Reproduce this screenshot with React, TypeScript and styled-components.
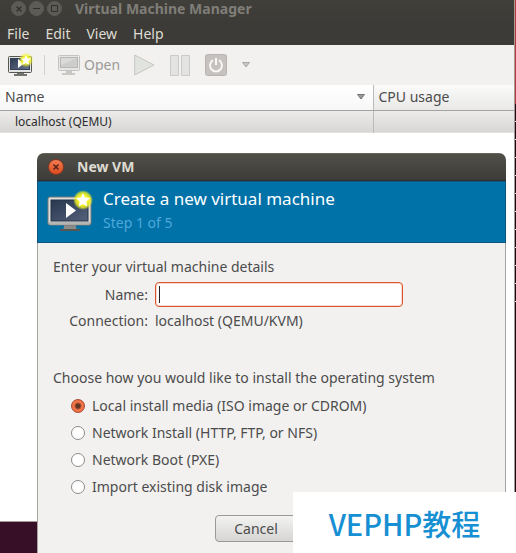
import React, { useState } from "react";
import styled, { createGlobalStyle } from "styled-components";

const GlobalStyle = createGlobalStyle`
  * { box-sizing: border-box; }
  body {
    margin: 0;
    font-family: "Noto Sans", "Noto Sans CJK SC", sans-serif;
    font-size: 14px;
    line-height: 20px;
    color: #4c4c4c;
  }
  button, input { font: inherit; color: inherit; margin: 0; }
`;

const Desktop = styled.main`
  position: relative;
  display: flex;
  min-height: 100vh;
  padding: 0 1px 31px 0;
  background: #371027;
`;

const ScreenEdge = styled.div`
  position: absolute;
  top: 0;
  right: 0;
  width: 1px;
  height: 100%;
  background:
    linear-gradient(#b8383c, #b8383c) 0 0 / 1px 104px no-repeat,
    repeating-linear-gradient(#1c0714 0 17px, #e8e4e6 17px 18px) 0 104px / 1px 204px no-repeat,
    #1c0714;
`;

const MainWindow = styled.section`
  display: flex;
  flex: 1;
  flex-direction: column;
  min-width: 0;
  border-right: 1px solid #a09d98;
  border-bottom: 1px solid #a09d98;
  background: #fff;
`;

const TitleBar = styled.header`
  display: flex;
  align-items: center;
  gap: 3px;
  height: 22px;
  padding: 0 0 5px 11px;
  background: linear-gradient(#403f3a, #3c3b37);
`;

const WindowButton = styled.button<{ $active?: boolean }>`
  display: grid;
  place-items: center;
  flex: none;
  width: ${(p) => (p.$active ? 16 : 15)}px;
  height: ${(p) => (p.$active ? 16 : 15)}px;
  padding: 0;
  border: 1px solid ${(p) => (p.$active ? "#8e3a20" : "#5d5b56")};
  border-radius: 50%;
  background: ${(p) => (p.$active ? "linear-gradient(#f47c54, #dd4b20)" : "#5d5b56")};
  color: ${(p) => (p.$active ? "#4a2014" : "#31302c")};

  svg { display: block; }
`;

const WindowTitle = styled.h1`
  margin: 0;
  padding-left: 10px;
  font-size: 14px;
  font-weight: 700;
  line-height: 16px;
  white-space: nowrap;
  color: #807d78;
`;

const DialogTitle = styled(WindowTitle)`
  color: #dfdbd2;
`;

const MenuBar = styled.nav`
  display: flex;
  align-items: center;
  gap: 16px;
  height: 23px;
  padding: 0 7px;
  background: #3c3b37;
`;

const MenuItem = styled.button`
  padding: 0;
  border: 0;
  background: none;
  color: #dfdbd2;
`;

const Toolbar = styled.div`
  display: flex;
  align-items: center;
  height: 40px;
  padding: 0 8px;
  background: #f2f1f0;
`;

const ToolButton = styled.button`
  display: flex;
  align-items: center;
  gap: 4px;
  margin-right: 15px;
  padding: 0;
  border: 0;
  background: none;
  color: #9c9a97;

  svg { display: block; }
`;

const OpenButton = styled(ToolButton)`
  margin-right: 14px;
`;

const Separator = styled.span`
  width: 1px;
  height: 20px;
  margin: 0 13px 0 -4px;
  background: #d3d1ce;
`;

const MachineTable = styled.table`
  width: 100%;
  table-layout: fixed;
  border-collapse: collapse;
`;

const HeaderCell = styled.th<{ $sorted?: boolean }>`
  width: ${(p) => (p.$sorted ? "auto" : "141px")};
  height: 25px;
  padding: 0 5px;
  border-bottom: 1px solid #a5a3a0;
  border-left: ${(p) => (p.$sorted ? "0" : "1px solid #bdbbb8")};
  background: ${(p) => (p.$sorted ? "linear-gradient(#fff, #f7f7f7)" : "linear-gradient(#fafafa, #e9e8e7)")};
  font-weight: 400;
  text-align: left;
`;

const HeaderLabel = styled.span`
  display: flex;
  align-items: center;
  justify-content: space-between;
  padding-right: 3px;
`;

const Cell = styled.td`
  height: 23px;
  padding: 0 15px;
  border-left: 1px solid #bdbbb8;
  background: linear-gradient(#ececeb, #d8d6d4);
  color: #2c2c2c;
  font-size: 12px;

  &:first-child { border-left: 0; }
`;

const Dialog = styled.section`
  position: absolute;
  top: 153px;
  right: 10px;
  bottom: 0;
  left: 37px;
  overflow: hidden;
  border-radius: 7px 7px 0 0;
  background: #f2f1f0;
`;

const DialogTitleBar = styled.header`
  display: flex;
  align-items: center;
  gap: 3px;
  height: 28px;
  padding: 0 11px;
  border-top: 1px solid #66645c;
  border-bottom: 1px solid #302f2b;
  background: linear-gradient(#504f48, #3d3c38);
`;

const Banner = styled.div`
  display: flex;
  align-items: center;
  gap: 10px;
  height: 62px;
  padding: 0 9px 2px;
  border: 1px solid #0b5682;
  background: #0072a8;

  svg { display: block; flex: none; }
`;

const BannerTitle = styled.h2`
  margin: 0;
  color: #fff;
  font-size: 17px;
  font-weight: 400;
  line-height: 24px;
`;

const BannerStep = styled.p`
  margin: 0;
  color: #4fa8dc;
  line-height: 24px;
`;

const Form = styled.form`
  height: 100%;
  padding: 14px 15px;
  border: solid #a5a3a0;
  border-width: 0 1px;
`;

const Details = styled.div`
  display: grid;
  grid-template-columns: 95px 248px;
  column-gap: 7px;
  align-items: center;
  margin-top: 5px;
`;

const FieldLabel = styled.label`
  text-align: right;
`;

const NameInput = styled.input`
  width: 100%;
  height: 25px;
  padding: 0 4px;
  border: 1px solid #d9552b;
  border-radius: 4px;
  outline: 0;
  background: #fff;
  box-shadow: inset 0 0 0 1px #f9d9cd;
`;

const Caret = styled.span`
  justify-self: start;
  width: 1px;
  height: 17px;
  margin-left: 4px;
  background: #222;
  pointer-events: none;
`;

const Field = styled.div`
  display: grid;
  align-items: center;

  > * { grid-area: 1 / 1; }
`;

const ConnectionRow = styled.span`
  line-height: 28px;
`;

const Options = styled.fieldset`
  margin: 29px 0 0;
  padding: 0;
  border: 0;
`;

const OptionsTitle = styled.legend`
  padding: 0;
  line-height: 28px;
  white-space: nowrap;
`;

const Option = styled.label`
  display: flex;
  align-items: center;
  gap: 7px;
  height: 27px;
  padding-left: 18px;
`;

const Radio = styled.input`
  appearance: none;
  width: 14px;
  height: 14px;
  border: 1px solid #8c8a87;
  border-radius: 50%;
  background: #fff;

  &:checked {
    border-color: #a8492b;
    background: radial-gradient(circle, #653321 0 2px, #f4764a 4px 5px, #ef6a3c 6px);
  }
`;

const Actions = styled.div`
  display: flex;
  padding: 15px 0 0 162px;
`;

const CancelButton = styled.button`
  width: 82px;
  height: 27px;
  padding: 0;
  border: 1px solid #9b9996;
  border-radius: 4px;
  background: linear-gradient(#f3f3f2, #d6d5d4);
`;

const Watermark = styled.aside`
  position: absolute;
  right: 0;
  bottom: 0;
  display: grid;
  place-items: center;
  width: 223px;
  height: 61px;
  background: #fff;
  color: #178fd3;
  font-family: "Noto Sans CJK SC", sans-serif;
  font-size: 29px;
  font-weight: 500;
  line-height: 40px;
`;

const CloseMark = () => (
  <svg width="8" height="8" viewBox="0 0 8 8" stroke="currentColor" strokeWidth="1.4">
    <path d="M1.5 1.5l5 5M6.5 1.5l-5 5" />
  </svg>
);

const MonitorIcon = () => (
  <svg width="46" height="42" viewBox="0 0 46 42">
    <defs>
      <linearGradient id="banner-screen" x2="1" y2="1">
        <stop stopColor="#29384f" />
        <stop offset="1" stopColor="#53617a" />
      </linearGradient>
      <radialGradient id="banner-glow">
        <stop offset=".45" stopColor="#fff82a" />
        <stop offset=".75" stopColor="#eeee20" stopOpacity=".8" />
        <stop offset="1" stopColor="#e6ee20" stopOpacity="0" />
      </radialGradient>
    </defs>
    <path d="M17 34h12v4l4 3H13l4-3z" fill="#8b8c89" />
    <path d="M13 39h20v2H13z" fill="#555753" />
    <rect x="1" y="7" width="43" height="28" rx="2" fill="#dededc" stroke="#777975" />
    <path d="M2 32h41v2H2z" fill="#b5b6b3" />
    <rect x="4" y="10" width="37" height="21" fill="url(#banner-screen)" stroke="#263346" />
    <path d="M19 13v15l10-7.500z" fill="#fff" />
    <circle cx="36" cy="10" r="10" fill="url(#banner-glow)" />
    <path d="M36 3l2 4.500 5 .6-3.700 3.400 1 5-4.300-2.500-4.300 2.500 1-5-3.700-3.400 5-.6z" fill="#fff" />
  </svg>
);

const NewMachineIcon = () => (
  <svg width="25" height="24" viewBox="0 0 25 24">
    <defs>
      <linearGradient id="new-screen" x2="1" y2="1">
        <stop stopColor="#2c3a52" />
        <stop offset="1" stopColor="#65728a" />
      </linearGradient>
      <radialGradient id="new-glow">
        <stop offset=".5" stopColor="#f8f628" />
        <stop offset="1" stopColor="#f2f22a" stopOpacity="0" />
      </radialGradient>
    </defs>
    <path d="M9 19h7v2h3v2H6v-2h3z" fill="#72736f" />
    <rect x=".5" y="3.500" width="23" height="16" rx="1" fill="#e4e4e2" stroke="#555753" />
    <rect x="2.500" y="5.500" width="19" height="11" fill="url(#new-screen)" stroke="#344158" />
    <path d="M10 6v9l6-4.500z" fill="#fff" />
    <circle cx="18" cy="7" r="7.500" fill="url(#new-glow)" />
    <path d="M18 2l1.500 3.300 3.600.4-2.700 2.400.8 3.600-3.200-1.800-3.200 1.800.8-3.600-2.700-2.400 3.600-.4z" fill="#fff" />
  </svg>
);

const OpenIcon = () => (
  <svg width="22" height="20" viewBox="0 0 22 20">
    <rect x=".5" y=".5" width="21" height="15" rx="1" fill="#e6e6e4" stroke="#c4c3c0" />
    <rect x="2.500" y="2.500" width="17" height="10" fill="#cdcdcb" stroke="#b8b7b5" />
    <path d="M3 3h16L3 10z" fill="#dadad8" />
    <path d="M8 16h6v2h3v2H4v-2h4z" fill="#c9c8c5" />
  </svg>
);

const PlayIcon = () => (
  <svg width="21" height="22" viewBox="0 0 21 22">
    <path d="M.7 1v20L20 11z" fill="#e1e3de" stroke="#c6c7c3" />
  </svg>
);

const PauseIcon = () => (
  <svg width="20" height="21" viewBox="0 0 20 21" fill="#e3e4e1" stroke="#cbcbc8">
    <path d="M.5.5h8v20h-8zM11.500.5h8v20h-8z" />
  </svg>
);

const PowerIcon = () => (
  <svg width="22" height="22" viewBox="0 0 22 22">
    <rect x=".5" y=".5" width="21" height="21" rx="2" fill="#c6c2c0" stroke="#b8b3b1" />
    <path d="M8 6.200a6 6 0 1 0 6 0M11 4v7" fill="none" stroke="#f8f7f6" strokeWidth="2" />
  </svg>
);

const ArrowIcon = ({ fill, stroke }: { fill: string; stroke: string }) => (
  <svg width="8" height="6" viewBox="0 0 8 6">
    <path d="M.5.5h7L4 5z" fill={fill} stroke={stroke} />
  </svg>
);

const options = [
  "Local install media (ISO image or CDROM)",
  "Network Install (HTTP, FTP, or NFS)",
  "Network Boot (PXE)",
  "Import existing disk image",
];

export default function App() {
  const [selected, setSelected] = useState(0);
  const [name, setName] = useState("");

  return (
    <>
      <GlobalStyle />
      <Desktop>
        <MainWindow>
          <TitleBar>
            <WindowButton aria-label="Close"><CloseMark /></WindowButton>
            <WindowButton aria-label="Minimize">
              <svg width="9" height="9" stroke="currentColor"><path d="M1 4.500h7" /></svg>
            </WindowButton>
            <WindowButton aria-label="Maximize">
              <svg width="9" height="9" fill="none" stroke="currentColor"><path d="M1.500 1.500h6v6h-6z" /></svg>
            </WindowButton>
            <WindowTitle>Virtual Machine Manager</WindowTitle>
          </TitleBar>
          <MenuBar aria-label="Main menu">
            {["File", "Edit", "View", "Help"].map((item) => <MenuItem key={item}>{item}</MenuItem>)}
          </MenuBar>
          <Toolbar>
            <ToolButton aria-label="New virtual machine"><NewMachineIcon /></ToolButton>
            <Separator />
            <OpenButton><OpenIcon />Open</OpenButton>
            <ToolButton aria-label="Run"><PlayIcon /></ToolButton>
            <ToolButton aria-label="Pause"><PauseIcon /></ToolButton>
            <ToolButton aria-label="Shut down"><PowerIcon /></ToolButton>
            <ToolButton aria-label="Shut down options"><ArrowIcon fill="#c8c6c3" stroke="#aaa8a5" /></ToolButton>
          </Toolbar>
          <MachineTable>
            <thead>
              <tr>
                <HeaderCell $sorted><HeaderLabel>Name<ArrowIcon fill="#999" stroke="#777" /></HeaderLabel></HeaderCell>
                <HeaderCell>CPU usage</HeaderCell>
              </tr>
            </thead>
            <tbody>
              <tr><Cell>localhost (QEMU)</Cell><Cell /></tr>
            </tbody>
          </MachineTable>
        </MainWindow>
        <ScreenEdge />
        <Dialog role="dialog" aria-labelledby="dialog-title">
          <DialogTitleBar>
            <WindowButton $active aria-label="Close dialog"><CloseMark /></WindowButton>
            <DialogTitle as="h2" id="dialog-title">New VM</DialogTitle>
          </DialogTitleBar>
          <Banner>
            <MonitorIcon />
            <div>
              <BannerTitle>Create a new virtual machine</BannerTitle>
              <BannerStep>Step 1 of 5</BannerStep>
            </div>
          </Banner>
          <Form>
            <div>Enter your virtual machine details</div>
            <Details>
              <FieldLabel htmlFor="vm-name">Name:</FieldLabel>
              <Field>
                <NameInput id="vm-name" value={name} onChange={(e) => setName(e.target.value)} />
                {name === "" && <Caret />}
              </Field>
              <FieldLabel as="span">Connection:</FieldLabel>
              <ConnectionRow>localhost (QEMU/KVM)</ConnectionRow>
            </Details>
            <Options>
              <OptionsTitle>Choose how you would like to install the operating system</OptionsTitle>
              {options.map((option, i) => (
                <Option key={option}>
                  <Radio type="radio" name="install" checked={selected === i} onChange={() => setSelected(i)} />
                  {option}
                </Option>
              ))}
            </Options>
            <Actions><CancelButton type="button">Cancel</CancelButton></Actions>
          </Form>
        </Dialog>
        <Watermark>VEPHP教程</Watermark>
      </Desktop>
    </>
  );
}
